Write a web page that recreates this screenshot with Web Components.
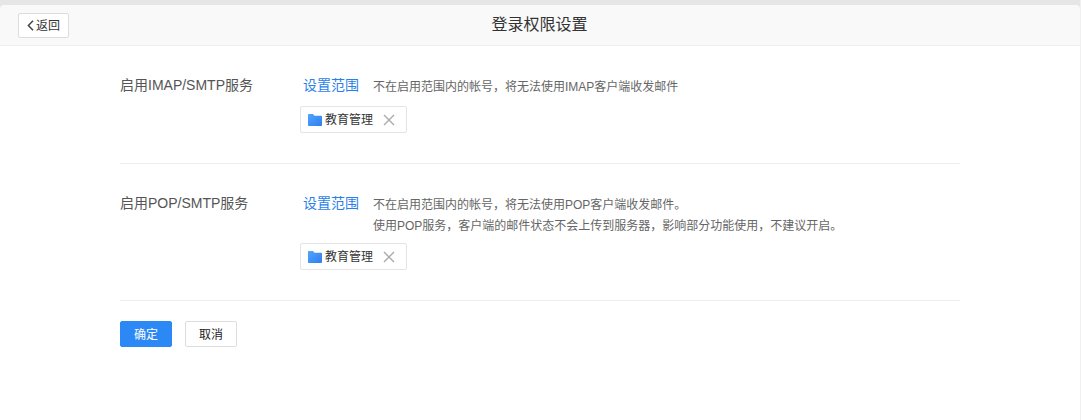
<!DOCTYPE html>
<html lang="zh">
<head>
<meta charset="utf-8">
<title>登录权限设置</title>
<style>
  html, body { margin: 0; background: #fff; }
  body { font-family: "Liberation Sans", "Noto Sans CJK SC", sans-serif; color: #555; height: 420px; box-sizing: border-box; border-right: 1px solid #f0f0f0; }
</style>
</head>
<body>
<perm-header title="登录权限设置"></perm-header>
<perm-form>
  <perm-row label="启用IMAP/SMTP服务">
    <span>不在启用范围内的帐号，将无法使用IMAP客户端收发邮件</span>
  </perm-row>
  <perm-row label="启用POP/SMTP服务" style="--tag-gap:7px">
    <span>不在启用范围内的帐号，将无法使用POP客户端收发邮件。</span>
    <span>使用POP服务，客户端的邮件状态不会上传到服务器，影响部分功能使用，不建议开启。</span>
  </perm-row>
</perm-form>
<script>
  class PermHeader extends HTMLElement {
    connectedCallback() {
      const root = this.attachShadow({ mode: 'open' });
      root.innerHTML = `
        <style>
          :host { display:block; background:#e6e6e6; padding-top:5px; }
          .bar { display:flex; align-items:center; justify-content:center; position:relative; height:40px; background:#f9f9f9; border-bottom:1px solid #eee; border-radius:4px 4px 0 0; }
          h1 { margin:0 1px 0 0; font-size:16px; font-weight:400; color:#333; line-height:40px; }
          .back { position:absolute; left:18px; top:8px; box-sizing:border-box; width:51px; height:25px; display:flex; align-items:center; gap:2px; padding-left:8px;
                  background:#fff; border:1px solid #ddd; border-radius:2px; font-size:12px; color:#333; }
          .back span { margin-bottom:2px; }
          svg { display:block; }
        </style>
        <div class="bar">
          <div class="back">
            <svg width="7" height="11" viewBox="0 0 7 11"><path d="M6 .8 1.400 5.500 6 10.200" fill="none" stroke="#444" stroke-width="1.500"/></svg>
            <span>返回</span>
          </div>
          <h1>${this.getAttribute('title')}</h1>
        </div>`;
    }
  }
  customElements.define('perm-header', PermHeader);

  class PermTag extends HTMLElement {
    connectedCallback() {
      const root = this.attachShadow({ mode: 'open' });
      root.innerHTML = `
        <style>
          :host { display:inline-flex; align-items:center; box-sizing:border-box; width:107px; height:27px; padding-left:7px; background:#fff; border:1px solid #e4e4e4; border-radius:2px; font-size:12px; color:#333; }
          svg { display:block; }
          .name { margin-left:3px; margin-bottom:2px; }
          .x { margin-left:10px; }
        </style>
        <svg width="14" height="12" viewBox="0 0 14 12">
          <defs><linearGradient id="fold" x1="0" y1="0" x2="1" y2="1"><stop offset="0" stop-color="#54a4fd"/><stop offset="1" stop-color="#2c7ff0"/></linearGradient></defs>
          <path d="M0 1C0 .4 .4 0 1 0H5L6.500 1.800H13C13.600 1.800 14 2.200 14 2.800V11C14 11.600 13.600 12 13 12H1C.4 12 0 11.600 0 11Z" fill="url(#fold)"/>
        </svg>
        <span class="name"><slot></slot></span>
        <svg class="x" width="12" height="12" viewBox="0 0 12 12"><path d="M1 1l10 10M11 1 1 11" stroke="#aaa" stroke-width="1.400" fill="none"/></svg>`;
    }
  }
  customElements.define('perm-tag', PermTag);

  class PermRow extends HTMLElement {
    connectedCallback() {
      const root = this.attachShadow({ mode: 'open' });
      root.innerHTML = `
        <style>
          :host { display:grid; grid-template-columns:180px 1fr; padding-top:30px; padding-bottom:30px; border-bottom:1px solid #eee; }
          .label { font-size:14px; color:#555; line-height:18px; }
          .top { display:flex; align-items:flex-start; padding-left:3px; }
          a { width:70px; flex:none; font-size:14px; line-height:18px; color:#2a7fe8; text-decoration:none; }
          .desc { display:flex; flex-direction:column; padding-top:1px; font-size:12px; line-height:20.500px; color:#666; }
          ::slotted(span) { display:block; }
          .tag { margin-top:var(--tag-gap, 8.500px); }
          .tag perm-tag { vertical-align:top; }
        </style>
        <div class="label">${this.getAttribute('label')}</div>
        <div>
          <div class="top"><a href="#">设置范围</a><div class="desc"><slot></slot></div></div>
          <div class="tag"><perm-tag>教育管理</perm-tag></div>
        </div>`;
    }
  }
  customElements.define('perm-row', PermRow);

  class PermForm extends HTMLElement {
    connectedCallback() {
      const root = this.attachShadow({ mode: 'open' });
      root.innerHTML = `
        <style>
          :host { display:block; width:840px; margin-left:120px; }
          .actions { display:flex; gap:13px; margin-top:20px; }
          button { box-sizing:border-box; width:52px; height:26px; padding:0 0 2px; font:12px "Liberation Sans","Noto Sans CJK SC",sans-serif; border-radius:2px; border:1px solid #ddd; background:#fff; color:#222; }
          .ok { background:#2b88f4; border-color:#2b88f4; color:#fff; }
        </style>
        <slot></slot>
        <div class="actions"><button class="ok">确定</button><button>取消</button></div>`;
    }
  }
  customElements.define('perm-form', PermForm);
</script>
</body>
</html>
